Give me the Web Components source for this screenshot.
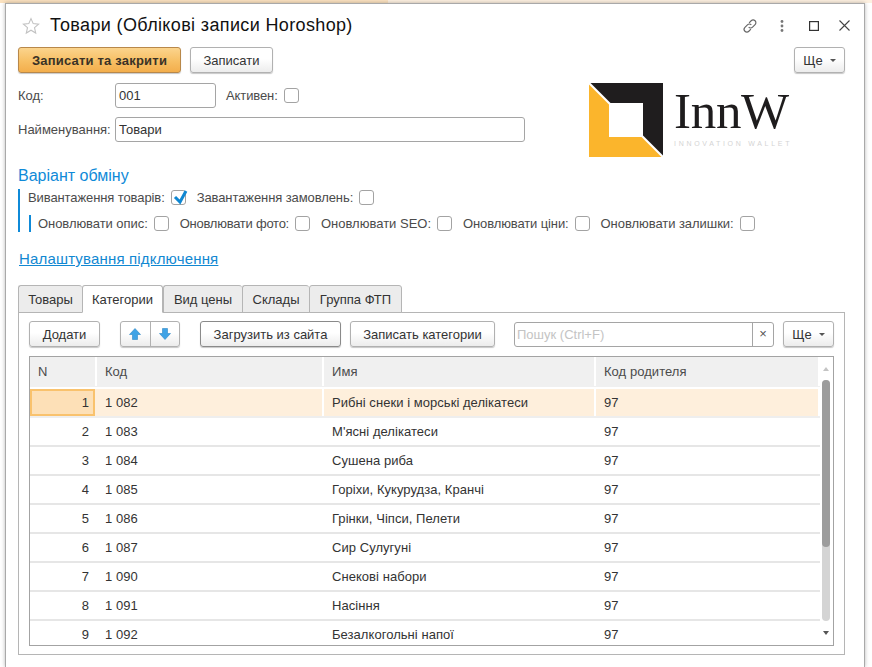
<!DOCTYPE html>
<html lang="uk">
<head>
<meta charset="utf-8">
<title>Товари</title>
<style>
  html, body { margin: 0; height: 100%; overflow: hidden; background: #fff; }
  body { font: 13px "Liberation Sans", Arial, sans-serif; color: #333; }
</style>
</head>
<body>

<form-window>
  <form-title slot="title">Товари (Облікові записи Horoshop)</form-title>

  <div slot="actions" style="display:flex;gap:9px;margin-bottom:10px">
    <ui-button kind="primary">Записати та закрити</ui-button>
    <ui-button style="width:83px">Записати</ui-button>
    <span style="flex:1"></span>
    <ui-button menu style="width:51px">Ще</ui-button>
  </div>

  <head-block slot="head"></head-block>

  <div slot="exchange">
    <section-title>Варіант обміну</section-title>
    <exchange-group></exchange-group>
    <a-link>Налаштування підключення</a-link>
  </div>

  <tab-panel slot="tabs"></tab-panel>
</form-window>

<script>
// small shared pieces first, the bigger blocks use them
class UiButton extends HTMLElement {
  connectedCallback() {
    if (this.shadowRoot) return;
    const menu = this.hasAttribute('menu');
    const shadow = this.attachShadow({ mode: 'open' });
    shadow.innerHTML = `
      <style>
        :host {
          display: inline-flex; align-items: center; justify-content: center;
          box-sizing: border-box; height: 26px; padding: 0 13px;
          border: 1px solid #b1b1b1; border-radius: 3px;
          background: linear-gradient(#fff 0%, #fff 45%, #ececec 100%);
          box-shadow: 0 1px 1px #c8c8c8;
          color: #333; white-space: nowrap;
        }
        :host([kind=primary]) {
          width: 163px; border-color: #b8884a; font-weight: bold; color: #3a3226; letter-spacing: .2px;
          background: linear-gradient(#fbd48d 0%, #f7bf64 55%, #f3ae4c 100%);
        }
        :host([dark]) { border-color: #8a8a8a; }
        .caret { width: 0; height: 0; margin: 1px 0 0 7px;
          border: 3px solid transparent; border-top: 3.5px solid #555; border-bottom: 0; }
      </style>
      <slot></slot>${menu ? '<span class="caret"></span>' : ''}`;
  }
}
customElements.define('ui-button', UiButton);

class UiCheck extends HTMLElement {
  connectedCallback() {
    if (this.shadowRoot) return;
    const on = this.hasAttribute('checked');
    const shadow = this.attachShadow({ mode: 'open' });
    shadow.innerHTML = `
      <style>
        :host {
          display: inline-flex; align-items: center; white-space: nowrap;
          color: #4b4b4b;
        }
        .box { position: relative; box-sizing: border-box; width: 15px; height: 15px; margin-left: 6px;
          border: 1px solid #a3a3a3; border-radius: 3px; background: #fff; }
        svg { position: absolute; left: 0; top: -1px; overflow: visible; }
      </style>
      <slot></slot>
      <span class="box">${on ? '<svg width="15" height="15" viewBox="0 0 15 15"><path d="M3 7l5 5 6-11" fill="none" stroke="#0f87d2" stroke-width="3"/></svg>' : ''}</span>`;
  }
}
customElements.define('ui-check', UiCheck);

class FormTitle extends HTMLElement {
  constructor() {
    super();
    const shadow = this.attachShadow({ mode: 'open' });
    shadow.innerHTML = `
      <style>
        :host { display: flex; align-items: center; height: 43px; padding: 0 0 0 16px; }
        .star { margin-right: 10px; }
        .text { flex: 1; font-size: 18px; letter-spacing: .36px; color: #111; }
        .tools { display: flex; align-items: center; }
        .tools svg { display: block; }
      </style>
      <svg class="star" width="18" height="18" viewBox="0 0 18 18"><path d="M9 1.6l2.200 5 5.400.5-4.100 3.600 1.200 5.300L9 13.200 4.300 16l1.200-5.300L1.400 7.100l5.400-.5z" fill="#fff" stroke="#c2c2c2" stroke-width="1.1"/></svg>
      <span class="text"><slot></slot></span>
      <span class="tools">
        <svg width="16" height="16" viewBox="0 0 18 18" fill="none" stroke="#666" stroke-width="1.3" style="margin-right:22px"><path d="M8 5.400l2.300-2.300a3.100 3.100 0 0 1 4.400 4.400l-2.800 2.800a3.100 3.100 0 0 1-4.400 0"/><path d="M10 12.600l-2.300 2.300a3.100 3.100 0 0 1-4.400-4.400l2.800-2.800a3.100 3.100 0 0 1 4.400 0"/></svg>
        <svg width="4" height="12" viewBox="0 0 4 12" fill="#777" style="margin-right:25px"><circle cx="2" cy="1.500" r="1.400"/><circle cx="2" cy="6" r="1.400"/><circle cx="2" cy="10.500" r="1.400"/></svg>
        <svg width="10" height="10" viewBox="0 0 10 10" fill="none" stroke="#333" stroke-width="1.2" style="margin-right:20px"><rect x=".6" y=".6" width="8.800" height="8.800"/></svg>
        <svg width="11" height="11" viewBox="0 0 11 11" fill="none" stroke="#444" stroke-width="1.1" style="margin-right:14px"><path d="M.5.5l10 10M10.500.5l-10 10"/></svg>
      </span>`;
  }
}
customElements.define('form-title', FormTitle);

class FormWindow extends HTMLElement {
  constructor() {
    super();
    const shadow = this.attachShadow({ mode: 'open' });
    shadow.innerHTML = `
      <style>
        :host { display: block; height: 100%; box-sizing: border-box; padding: 3px 7px 0 5px;
          background: linear-gradient(90deg, #fbe2c0 0, #fbe2c0 388px, #fdf0e0 388px) top / 100% 3px no-repeat; }
        .win { box-sizing: border-box; height: 100%; background: #fff; border: 1px solid #a9a9a9; border-bottom: 0;
          box-shadow: 0 0 4px rgba(0,0,0,.28); padding: 0; }
        .body { padding: 0 19px 0 12px; }
      </style>
      <div class="win">
        <slot name="title"></slot>
        <div class="body">
          <slot name="actions"></slot>
          <slot name="head"></slot>
          <slot name="exchange"></slot>
          <slot name="tabs"></slot>
        </div>
      </div>`;
  }
}
customElements.define('form-window', FormWindow);

class HeadBlock extends HTMLElement {
  constructor() {
    super();
    const shadow = this.attachShadow({ mode: 'open' });
    shadow.innerHTML = `
      <style>
        :host { display: flex; color: #4b4b4b; }
        .fields { width: 507px; display: grid; grid-template-columns: 97px 101px auto 1fr; grid-template-rows: 25px 25px; row-gap: 9px; align-items: center; }
        .inp { box-sizing: border-box; height: 25px; display: flex; align-items: center; padding-left: 3px;
          border: 1px solid #a5a5a5; border-radius: 3px; color: #333; background: #fff; }
        .wide { grid-column: 2 / 5; }
        ui-check { margin-left: 10px; letter-spacing: -.1px; }
        .logo { margin-left: 64px; display: flex; height: 74px; }
        .mark { display: block; }
        .word { margin-left: 11px; color: #1e1c1d; }
        .word b { display: block; font: normal 51px/50px "Liberation Serif", serif; margin-top: 3px; letter-spacing: -.3px; }
        .word i { display: block; font: normal 7px/8px "Liberation Sans", sans-serif; color: #d4d4d4; letter-spacing: 2.7px; margin-top: 3.5px; white-space: nowrap; }
      </style>
      <div class="fields">
        <span>Код:</span><span class="inp">001</span>
        <ui-check>Активен:</ui-check><span></span>
        <span>Найменування:</span><span class="inp wide">Товари</span>
      </div>
      <div class="logo">
        <svg class="mark" width="74" height="74" viewBox="0 0 74 74">
          <path d="M1.500 0H74V72.500L54 52.500V20H21.500z" fill="#1f1d1e"/>
          <path d="M0 1.500L20 21.500V54H52.500L72.500 74H0z" fill="#fbb52c"/>
        </svg>
        <span class="word"><b>InnW</b><i>INNOVATION WALLET</i></span>
      </div>`;
  }
}
customElements.define('head-block', HeadBlock);

class SectionTitle extends HTMLElement {
  constructor() {
    super();
    this.attachShadow({ mode: 'open' }).innerHTML = `
      <style>:host { display: block; margin-top: 10px; font-size: 16px; line-height: 18px; color: #0f8ad8; }</style>
      <slot></slot>`;
  }
}
customElements.define('section-title', SectionTitle);

class ALink extends HTMLElement {
  constructor() {
    super();
    this.attachShadow({ mode: 'open' }).innerHTML = `
      <style>:host { display: block; margin: 18px 0 0 1px; font-size: 15px; line-height: 18px; letter-spacing: .17px; color: #1188d2; text-decoration: underline; }</style>
      <slot></slot>`;
  }
}
customElements.define('a-link', ALink);

class ExchangeGroup extends HTMLElement {
  constructor() {
    super();
    const shadow = this.attachShadow({ mode: 'open' });
    shadow.innerHTML = `
      <style>
        :host { display: block; border-left: 2px solid #0f8ad8; padding-left: 8px; margin-top: 4px; height: 43px; box-sizing: border-box; }
        .row { display: flex; gap: 11px; height: 17px; align-items: center; }
        .sub { margin: 9px 0 0 1px; border-left: 2px solid #0f8ad8; padding-left: 7px; }
      </style>
      <div class="row">
        <ui-check checked style="letter-spacing:-.1px">Вивантаження товарів:</ui-check>
        <ui-check style="letter-spacing:-.09px">Завантаження замовлень:</ui-check>
      </div>
      <div class="row sub">
        <ui-check style="letter-spacing:-.06px">Оновлювати опис:</ui-check>
        <ui-check style="letter-spacing:-.25px">Оновлювати фото:</ui-check>
        <ui-check>Оновлювати SEO:</ui-check>
        <ui-check style="letter-spacing:-.12px">Оновлювати ціни:</ui-check>
        <ui-check style="letter-spacing:-.05px">Оновлювати залишки:</ui-check>
      </div>`;
  }
}
customElements.define('exchange-group', ExchangeGroup);

class DataGrid extends HTMLElement {
  constructor() {
    super();
    const rows = [
      ['1', '1 082', 'Рибні снеки і морські делікатеси'],
      ['2', '1 083', 'М\'ясні делікатеси'],
      ['3', '1 084', 'Сушена риба'],
      ['4', '1 085', 'Горіхи, Кукурудза, Кранчі'],
      ['5', '1 086', 'Грінки, Чіпси, Пелети'],
      ['6', '1 087', 'Сир Сулугуні'],
      ['7', '1 090', 'Снекові набори'],
      ['8', '1 091', 'Насіння'],
      ['9', '1 092', 'Безалкогольні напої'],
    ];
    const shadow = this.attachShadow({ mode: 'open' });
    shadow.innerHTML = `
      <style>
        :host { display: flex; box-sizing: border-box; height: 290px; border: 1px solid #a3a3a3; overflow: hidden; }
        .cols { flex: 1; min-width: 0; }
        .row { display: grid; grid-template-columns: 67px 227px 272px 1fr; height: 29px; box-sizing: border-box;
          border-bottom: 2px solid #e6e6e6; align-items: center; letter-spacing: .05px; }
        .row > span { padding-left: 8px; height: 100%; display: flex; align-items: center; box-sizing: border-box; border-right: 0; }
        .row > span.n { justify-content: flex-end; padding: 0 8px 0 0; }
        .head { height: 32px; padding-bottom: 1px; background: #f0f0f0; border-bottom: 2px solid #fff; color: #4b4b4b; }
        .head > span { border-right: 2px solid #fff; }
        .sel { background: #feefdc; border-bottom-color: #eee; }
        .sel > span { border-right: 2px solid #fff; }
        .sel > span.n { background: #fde0b7; box-shadow: inset 0 0 0 2px #f9c26d; margin: 0 2px 0 0; padding-right: 6px; border: 0; }
        .bar { width: 13px; flex: none; position: relative; background: #fff; }
        .arrow { position: absolute; left: 3px; width: 0; height: 0; border: 3.5px solid transparent; }
        .up { top: 10px; border-bottom: 4px solid #c4c4c4; border-top: 0; }
        .down { top: 274px; border-top: 4px solid #555; border-bottom: 0; }
        .track { position: absolute; left: 2px; top: 23px; width: 8px; height: 241px; border-radius: 4px; background: #d4d4d4; }
        .thumb { height: 167px; border-radius: 4px; background: #9c9c9c; }
      </style>
      <div class="cols">
        <div class="row head"><span>N</span><span>Код</span><span>Имя</span><span>Код родителя</span></div>
        ${rows.map((r, i) => `<div class="row${i === 0 ? ' sel' : ''}"><span class="n">${r[0]}</span><span>${r[1]}</span><span>${r[2]}</span><span>97</span></div>`).join('')}
      </div>
      <div class="bar">
        <span class="arrow up"></span>
        <div class="track"><div class="thumb"></div></div>
        <span class="arrow down"></span>
      </div>`;
  }
}
customElements.define('data-grid', DataGrid);

class TabPanel extends HTMLElement {
  constructor() {
    super();
    const shadow = this.attachShadow({ mode: 'open' });
    shadow.innerHTML = `
      <style>
        :host { display: block; margin-top: 17px; }
        .tabs { display: flex; height: 28px; position: relative; z-index: 1; }
        .tab { box-sizing: border-box; height: 28px; display: flex; align-items: center; justify-content: center;
          border: 1px solid #b5b5b5; border-right: 0; border-radius: 3px 3px 0 0; background: #ececec; color: #333; }
        .tab:last-child { border-right: 1px solid #b5b5b5; }
        .tab.on { background: #fff; border-bottom-color: #fff; border-right: 1px solid #b5b5b5; }
        .panel { box-sizing: border-box; height: 343px; margin-top: -1px; border: 1px solid #b5b5b5; padding: 8px 10px 0; }
        .bar { display: flex; align-items: center; height: 26px; margin-bottom: 9px; }
        .move { display: flex; width: 60px; height: 26px; box-sizing: border-box; margin: 0 20px;
          border: 1px solid #b1b1b1; border-radius: 3px; box-shadow: 0 1px 1px #c8c8c8;
          background: linear-gradient(#fff 0%, #fff 45%, #ececec 100%); }
        .move span { flex: 1; display: flex; align-items: center; justify-content: center; }
        .move span + span { border-left: 1px solid #b1b1b1; }
        .search { box-sizing: border-box; display: flex; width: 260px; height: 25px; margin: 0 9px 0 19px;
          border: 1px solid #a5a5a5; border-radius: 3px; background: #fff; color: #c4c4c4; }
        .search b { flex: 1; font-weight: normal; padding-left: 2px; line-height: 23px; }
        .search i { width: 20px; border-left: 1px solid #a5a5a5; font-style: normal; color: #555; text-align: center; line-height: 21px; font-size: 13px; }
      </style>
      <div class="tabs">
        <div class="tab" style="width:64px">Товары</div>
        <div class="tab on" style="width:81px">Категории</div>
        <div class="tab" style="width:79px">Вид цены</div>
        <div class="tab" style="width:67px">Склады</div>
        <div class="tab" style="width:93px">Группа ФТП</div>
      </div>
      <div class="panel">
        <div class="bar">
          <ui-button style="width:71px">Додати</ui-button>
          <div class="move">
            <span><svg width="12" height="12" viewBox="0 0 12 12"><path d="M6 .5l5.500 6H8.500v5h-5v-5H.5z" fill="#3fa3e6" stroke="#2d86c4" stroke-width=".6"/></svg></span>
            <span><svg width="12" height="12" viewBox="0 0 12 12"><path d="M6 11.500L.5 5.500h3v-5h5v5h3z" fill="#3fa3e6" stroke="#2d86c4" stroke-width=".6"/></svg></span>
          </div>
          <ui-button dark style="width:141px;margin-right:9px">Загрузить из сайта</ui-button>
          <ui-button style="width:145px">Записать категории</ui-button>
          <div class="search"><b>Пошук (Ctrl+F)</b><i>×</i></div>
          <ui-button menu style="width:51px">Ще</ui-button>
        </div>
        <data-grid></data-grid>
      </div>`;
  }
}
customElements.define('tab-panel', TabPanel);
</script>
</body>
</html>
